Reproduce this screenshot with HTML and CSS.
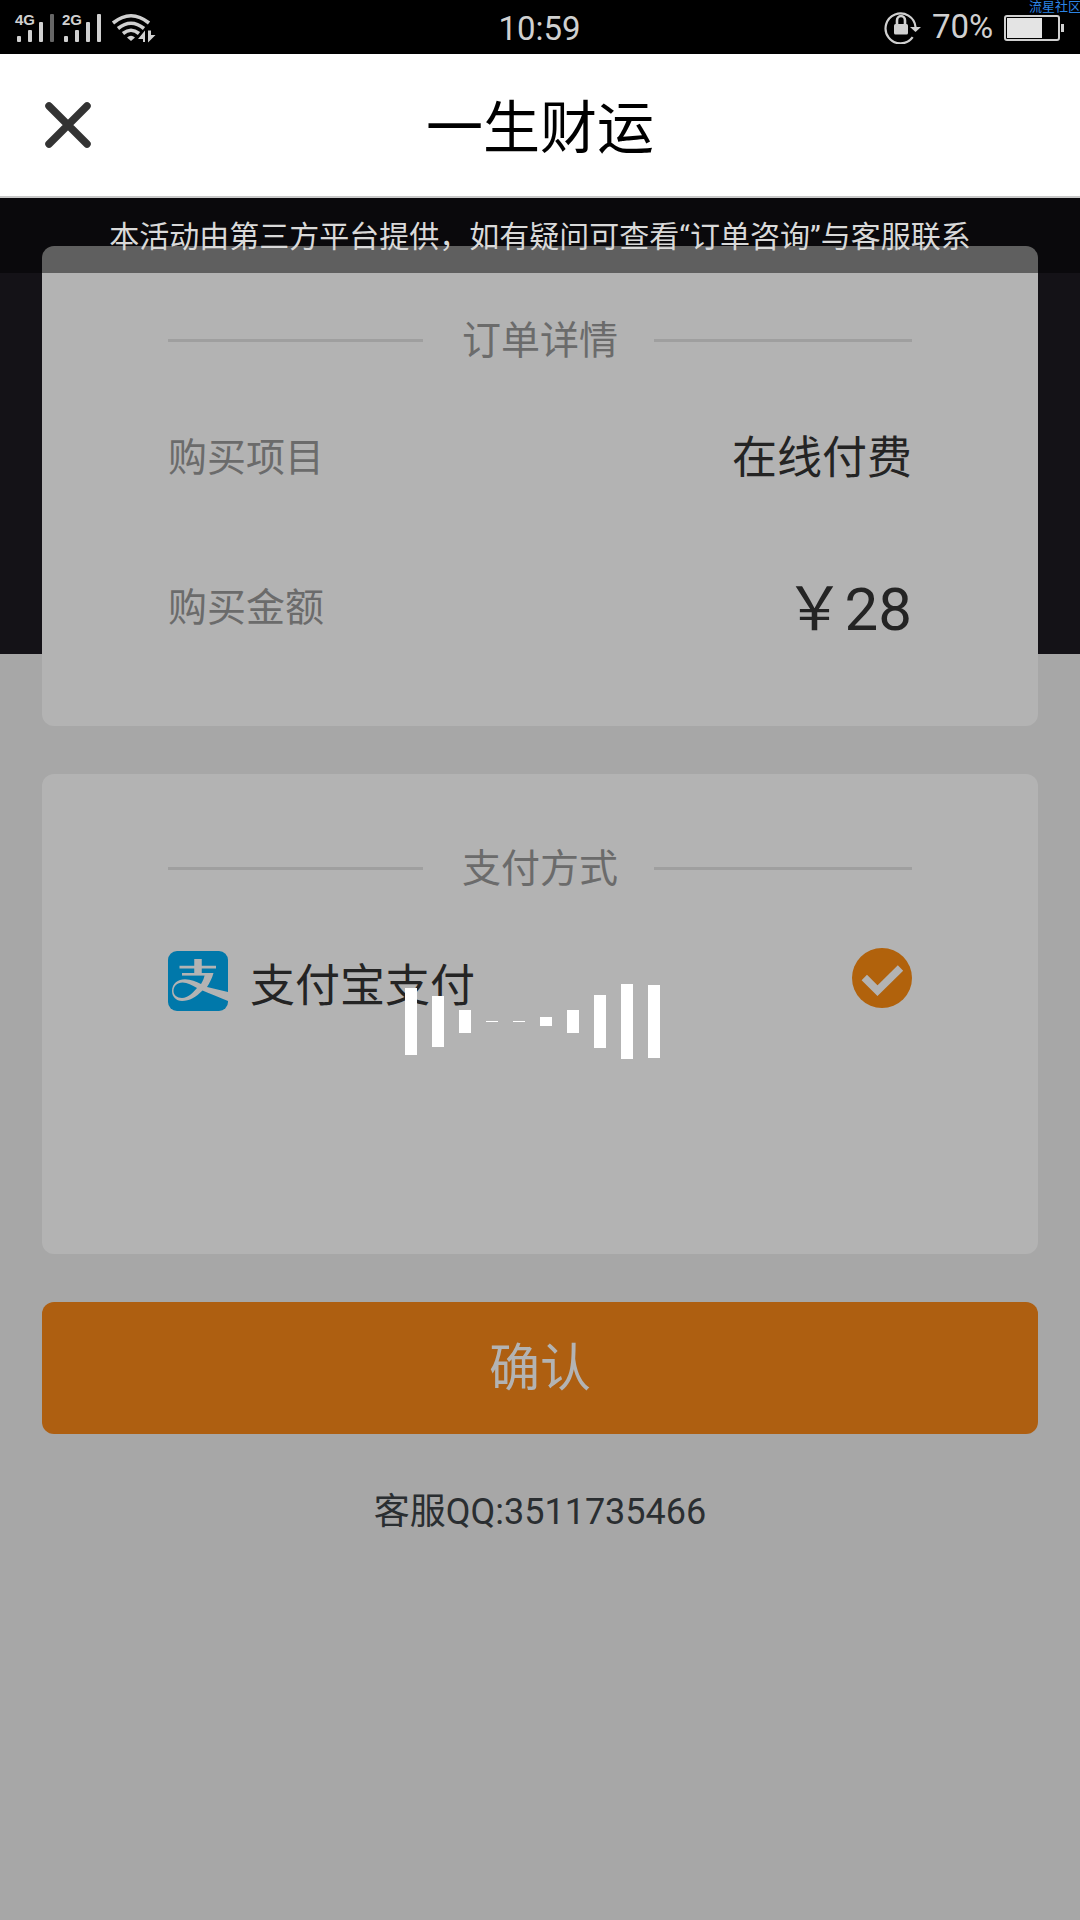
FILE: index.html
```html
<!DOCTYPE html>
<html lang="zh-CN">
<head>
<meta charset="utf-8">
<title>一生财运</title>
<link rel="stylesheet" href="styles.css">
</head>
<body>
<div class="status">
  <svg class="signals" width="160" height="54" viewBox="0 0 160 54">
    <g class="net"><text x="15" y="24" textLength="20">4G</text><text x="62" y="24" textLength="20">2G</text></g>
    <g fill="#d0d0d0">
      <rect x="17" y="35" width="4" height="6" rx="1"/><rect x="28" y="29" width="4" height="12" rx="1"/><rect x="39" y="21" width="4" height="20" rx="1"/>
      <rect x="50" y="13" width="4" height="28" rx="1" fill="#666"/>
      <rect x="64" y="35" width="4" height="6" rx="1"/><rect x="75" y="29" width="4" height="12" rx="1"/><rect x="86" y="21" width="4" height="20" rx="1"/><rect x="97" y="13" width="4" height="28" rx="1"/>
      <path d="M131 40L127 36.500Q131 33 135 36.500Z"/>
      <path d="M138 38L145 29.500V41H143V38Z"/><path d="M148 29.500V41.500L155.500 34H151V29.500Z"/>
    </g>
    <g fill="none" stroke="#d0d0d0" stroke-width="3.600">
      <path d="M113 22Q131 7.500 149 22"/><path d="M118 27.500Q131 17 144 27.500"/><path d="M123 32.500Q131 26 139 32.500"/>
    </g>
  </svg>
  <div class="clock">10:59</div>
  <div class="status-right">
    <svg class="lock" width="38" height="34" viewBox="0 0 38 34">
      <path d="M28.700 27.200A15 15 0 1 1 31.500 17" fill="none" stroke="#d0d0d0" stroke-width="2.200"/>
      <path d="M26 17H37L31.500 22Z" fill="#d0d0d0"/>
      <rect x="10" y="14" width="14" height="10.500" rx="1.500" fill="#d0d0d0"/>
      <path d="M13 15V10.500A4 4.500 0 0 1 21 10.500V15" fill="none" stroke="#d0d0d0" stroke-width="2.600"/>
    </svg>
    <span class="percent">70%</span>
    <svg class="battery" width="61" height="26" viewBox="0 0 61 26">
      <rect x="1" y="1" width="54" height="24" rx="2" fill="none" stroke="#d0d0d0" stroke-width="2"/>
      <rect x="3" y="3" width="35" height="20" fill="#e4e4e4"/>
      <rect x="57" y="9" width="3" height="8" fill="#d0d0d0"/>
    </svg>
  </div>
  <div class="watermark">流星社区</div>
</div>
<header class="header">
  <svg class="close" width="48" height="48" viewBox="0 0 48 48"><path d="M5 5L43 43M43 5L5 43" stroke="#333" stroke-width="7.500" stroke-linecap="round"/></svg>
  <h1>一生财运</h1>
</header>
<main class="page">
  <div class="notice">本活动由第三方平台提供，如有疑问可查看“订单咨询”与客服联系</div>
  <section class="card">
    <h2 class="caption"><span>订单详情</span></h2>
    <div class="row item"><span class="label">购买项目</span><span class="value">在线付费</span></div>
    <div class="row amount"><span class="label">购买金额</span><span class="price">￥28</span></div>
  </section>
  <section class="card">
    <h2 class="caption"><span>支付方式</span></h2>
    <div class="method">
      <svg class="alipay" width="60" height="60" viewBox="0 0 60 60">
        <rect width="60" height="60" rx="9" fill="#0078aa"/>
        <g fill="none" stroke="#b3b3b3">
          <path d="M30 8V24" stroke-width="7.500"/><path d="M11.500 16.200H48" stroke-width="2.800"/>
          <path d="M14 23.300H40" stroke-width="2.600"/>
        </g>
        <path d="M37 22H45.500C44 27.500 41.500 32 39 36L60 41V50C51 46.500 42 42.500 34.500 39.500C28 46 21.500 50 14 50C8 50 4 45.500 4 40C4 32.500 10 28.200 17 28.200C23 28.200 28 30.500 33 33C35 30 36.500 26 37 22ZM29 37C24 34 19.500 31.500 14.500 31.500C9 31.500 5.500 35.500 5.500 40C5.500 44 9 47 14 47C20 46.500 25 42 29 37Z" fill="#b3b3b3"/>
      </svg>
      <span class="value">支付宝支付</span>
      <svg class="check" width="60" height="60" viewBox="0 0 60 60"><circle cx="30" cy="30" r="30" fill="#b1620c"/><path d="M12.300 29.500L25.500 42.700L48.500 20" fill="none" stroke="#b3b3b3" stroke-width="7.600"/></svg>
    </div>
  </section>
  <button class="confirm">确认</button>
  <p class="service">客服QQ:3511735466</p>
</main>
<div class="loader"><i class="h67"></i><i class="h51"></i><i class="h23"></i><i class="h1"></i><i class="h1"></i><i class="h9"></i><i class="h23"></i><i class="h53"></i><i class="h75"></i><i class="h73"></i></div>
</body>
</html>
```
FILE: styles.css
```css
* { box-sizing: border-box; }
body {
  margin: 0;
  width: 1080px;
  height: 1920px;
  overflow: hidden;
  position: relative;
  background: #a7a7a7;
  font-family: Roboto, "Noto Sans CJK SC", sans-serif;
}
svg { display: block; flex: none; }
.status {
  height: 54px;
  background: #000;
  color: #d0d0d0;
  display: grid;
  grid-template-columns: 1fr auto 1fr;
  align-items: center;
  position: relative;
}
.net { font: bold 15px "Liberation Sans", sans-serif; fill: #d0d0d0; }
.clock { font-size: 33px; line-height: 54px; padding-top: 2px; margin-left: -1px; }
.status-right { display: flex; align-items: center; justify-content: flex-end; padding-right: 15px; height: 54px; }
.lock { margin: 0 -1px 2px 0; }
.percent { font-size: 33px; line-height: 50px; width: 62px; margin: 0 10px 2px 11px; white-space: nowrap; }
.battery { margin-bottom: 1px; }
.watermark {
  position: absolute;
  left: 1029px;
  top: -1px;
  width: 51px;
  overflow: hidden;
  white-space: nowrap;
  font-size: 13px;
  line-height: 15px;
  color: #2c84e4;
}
.header {
  height: 144px;
  background: #fff;
  border-bottom: 2px solid #c8c8c8;
  display: grid;
  grid-template-columns: 1fr auto 1fr;
  align-items: center;
}
.close { margin-left: 44px; }
h1 { margin: 0; padding-top: 8px; font-size: 57px; font-weight: 400; line-height: 80px; color: #000; }
.page {
  position: relative;
  height: 1722px;
  padding: 48px 42px 0;
  display: flex;
  flex-direction: column;
  gap: 48px;
  background: linear-gradient(#141217 456px, #a7a7a7 456px);
}
.notice {
  position: absolute;
  top: 0;
  left: 0;
  width: 100%;
  height: 75px;
  background: rgba(0, 0, 0, .47);
  color: #d9d9d9;
  font-size: 30px;
  line-height: 77px;
  text-align: center;
}
.card {
  flex: none;
  height: 480px;
  border-radius: 12px;
  background: #b3b3b3;
  padding: 63px 126px 0;
}
.caption {
  margin: 0;
  height: 61px;
  display: grid;
  grid-template-columns: 255px 1fr 258px;
  grid-template-rows: 62px;
  align-items: center;
  text-align: center;
  font-size: 39px;
  font-weight: 400;
  line-height: 60px;
  color: #6b6b6b;
}
.caption span { padding: 2px 0 0 3px; }
.caption::before, .caption::after { content: ""; height: 3px; background: #9f9f9f; }
.row { display: flex; justify-content: space-between; align-items: center; height: 80px; }
.item { margin-top: 44px; }
.amount { margin-top: 70px; }
.label { font-size: 39px; color: #6b6b6b; }
.value { font-size: 45px; color: #242424; }
.price { font-size: 60px; color: #242424; margin: 0 0 2px; }
.method { display: flex; align-items: flex-start; margin-top: 50px; line-height: 66px; }
.method .value { padding-top: 6px; }
.alipay { margin: 3px 22px 0 0; }
.check { margin-left: auto; }
.confirm {
  flex: none;
  height: 132px;
  padding: 0 0 8px;
  border: 0;
  border-radius: 12px;
  background: #ae5f11;
  color: #b3b3b3;
  font: 51px Roboto, "Noto Sans CJK SC", sans-serif;
}
.service { margin: 0; text-align: center; font-size: 36px; line-height: 60px; color: #2a2e31; }
.loader {
  position: absolute;
  left: 405px;
  top: 984px;
  height: 75px;
  display: flex;
  align-items: center;
  gap: 15px;
}
.loader i { width: 12px; background: #fff; }
.h1 { height: 1px; }
.h9 { height: 9px; }
.h23 { height: 23px; }
.h51 { height: 51px; }
.h53 { height: 53px; }
.h67 { height: 67px; }
.h73 { height: 73px; }
.h75 { height: 75px; }
```
